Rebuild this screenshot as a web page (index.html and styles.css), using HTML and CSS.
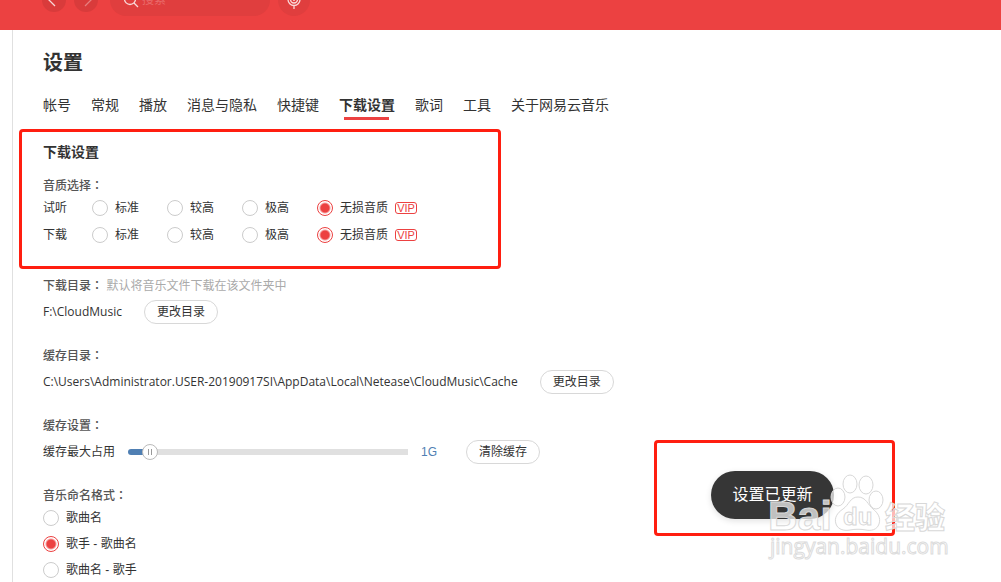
FILE: index.html
```html
<!DOCTYPE html>
<html lang="zh-CN">
<head>
  <meta charset="UTF-8">
  <title>设置</title>
  <link rel="stylesheet" href="styles.css">
</head>
<body>
  <div class="app">
    <header class="topbar">
      <button class="nav-btn" aria-label="后退">
        <svg width="12" height="12" viewBox="0 0 12 12"><path d="M7 0 1 6l6 6"/></svg>
      </button>
      <button class="nav-btn disabled" aria-label="前进">
        <svg width="12" height="12" viewBox="0 0 12 12"><path d="M5 0l6 6-6 6"/></svg>
      </button>
      <div class="search">
        <svg width="14" height="14" viewBox="0 0 14 14"><circle cx="6" cy="6" r="5.500"/><path d="M10 10 14 14"/></svg>
        <input type="text" placeholder="搜索" aria-label="搜索">
      </div>
      <button class="mic-btn" aria-label="听歌识曲">
        <svg width="16" height="18" viewBox="0 0 16 18"><rect x="4.500" y="0" width="7" height="12" rx="3.500"/><path d="M2 7v1.500a6 6 0 0 0 12 0V7M8 14.500V18M7 9h2"/></svg>
      </button>
    </header>

    <main class="page">
      <h1>设置</h1>

      <nav class="tabs">
        <a href="#account">帐号</a>
        <a href="#general">常规</a>
        <a href="#play">播放</a>
        <a href="#privacy">消息与隐私</a>
        <a href="#hotkeys">快捷键</a>
        <a href="#download" class="active">下载设置</a>
        <a href="#lyrics">歌词</a>
        <a href="#tools">工具</a>
        <a href="#about">关于网易云音乐</a>
      </nav>

      <section class="quality marked" id="download">
        <h2>下载设置</h2>
        <h3>音质选择<span lang="zh-TW">：</span></h3>
        <div class="quality-row" role="radiogroup" aria-label="试听">
          <span>试听</span>
          <label><input type="radio" name="listen">标准</label>
          <label><input type="radio" name="listen">较高</label>
          <label><input type="radio" name="listen">极高</label>
          <label><input type="radio" name="listen" checked>无损音质<span class="vip">VIP</span></label>
        </div>
        <div class="quality-row" role="radiogroup" aria-label="下载">
          <span>下载</span>
          <label><input type="radio" name="save">标准</label>
          <label><input type="radio" name="save">较高</label>
          <label><input type="radio" name="save">极高</label>
          <label><input type="radio" name="save" checked>无损音质<span class="vip">VIP</span></label>
        </div>
      </section>

      <section class="group">
        <h3>下载目录<span lang="zh-TW">：</span> <small>默认将音乐文件下载在该文件夹中</small></h3>
        <div class="row">
          <span class="path">F:\CloudMusic</span>
          <button class="btn">更改目录</button>
        </div>
      </section>

      <section class="group">
        <h3>缓存目录<span lang="zh-TW">：</span></h3>
        <div class="row">
          <span class="path">C:\Users\Administrator.USER-20190917SI\AppData\Local\Netease\CloudMusic\Cache</span>
          <button class="btn">更改目录</button>
        </div>
      </section>

      <section class="group">
        <h3>缓存设置<span lang="zh-TW">：</span></h3>
        <div class="row cache">
          <label for="cache-size">缓存最大占用</label>
          <input type="range" id="cache-size" min="0" max="1000" value="53">
          <output for="cache-size">1G</output>
          <button class="btn">清除缓存</button>
        </div>
      </section>

      <section class="group">
        <h3>音乐命名格式<span lang="zh-TW">：</span></h3>
        <label class="name-option"><input type="radio" name="format">歌曲名</label>
        <label class="name-option"><input type="radio" name="format" checked>歌手 - 歌曲名</label>
        <label class="name-option"><input type="radio" name="format">歌曲名 - 歌手</label>
      </section>
    </main>

    <div class="toast-area marked">
      <div class="toast" role="status">设置已更新</div>
    </div>

    <svg class="watermark" width="190" height="90" viewBox="0 0 190 90" aria-hidden="true">
      <g class="mark">
        <text class="latin" x="2" y="60">Bai</text>
        <ellipse cx="84" cy="14" rx="7" ry="9"/>
        <ellipse cx="100" cy="15" rx="7" ry="9"/>
        <ellipse cx="72" cy="27" rx="7" ry="9"/>
        <ellipse cx="110" cy="30" rx="7" ry="9"/>
        <path d="M92 27c8 0 10 8 15 12s8 9 6 15-8 7-13 6-11-1-16 0-12 0-14-6 1-11 7-15 7-12 15-12z"/>
        <text class="du" x="77" y="55">du</text>
        <text class="cjk" x="119" y="58">经验</text>
      </g>
      <text class="site" x="4" y="84">jingyan.baidu.com</text>
    </svg>
  </div>
</body>
</html>
```
FILE: styles.css
```css
* {
  margin: 0;
  padding: 0;
  box-sizing: border-box;
}

body {
  background: #fff;
  color: #333;
  font-family: "Liberation Sans", "Noto Sans CJK SC", sans-serif;
  font-size: 12px;
  line-height: 20px;
}

button,
input {
  font: inherit;
  color: inherit;
}

.app {
  position: relative;
  display: flex;
  flex-direction: column;
  height: 100vh;
  overflow: hidden;
}

/* Top bar, scrolled halfway out of view */
.topbar {
  display: flex;
  flex-shrink: 0;
  align-items: center;
  gap: 8px;
  height: 60px;
  margin-top: -30px;
  padding-left: 42px;
  background: #ec4141;
}

.topbar svg {
  overflow: visible;
  fill: none;
  stroke: #fff;
  stroke-opacity: 0.8;
  stroke-width: 1.3;
}

.nav-btn,
.mic-btn {
  display: flex;
  align-items: center;
  justify-content: center;
  width: 24px;
  height: 24px;
  border: none;
  border-radius: 50%;
  background: #d93b3b;
}

.topbar .disabled svg {
  stroke-opacity: 0.35;
}

.mic-btn {
  width: 32px;
  height: 32px;
  background: #e03e3e;
}

.search {
  display: flex;
  align-items: center;
  gap: 4px;
  width: 160px;
  height: 32px;
  margin-left: 4px;
  padding: 0 14px;
  border-radius: 16px;
  background: #e03e3e;
}

.search input {
  flex: 1;
  min-width: 0;
  border: none;
  outline: none;
  background: none;
}

.search input::placeholder {
  color: #e96a6a;
}

/* Settings page */
.page {
  flex: 1 0 auto;
  margin-left: 12px;
  padding: 20px 30px 0;
  border-left: 1px solid #e0e0e0;
}

h1 {
  margin-bottom: 19px;
  font-size: 20px;
  line-height: 26px;
}

.tabs {
  display: flex;
  gap: 20px;
  font-size: 14px;
}

.tabs a {
  position: relative;
  padding-bottom: 5px;
  color: #333;
  text-decoration: none;
  white-space: nowrap;
}

.tabs .active {
  font-weight: bold;
}

.tabs .active::after {
  content: "";
  position: absolute;
  left: 5px;
  right: 6px;
  bottom: 0;
  height: 3px;
  background: #ec4141;
}

.marked {
  border: 3px solid #ff1e10;
  border-radius: 4px;
}

.quality {
  width: 482px;
  margin: 9px 0 6px -24px;
  padding: 10px 21px 18px;
}

h2 {
  margin-bottom: 13px;
  font-size: 14px;
}

h3 {
  padding-top: 2px;
  color: #555;
  font-size: 12px;
  font-weight: 500;
  line-height: 18px;
}

h3 small {
  color: #aaa;
  font-size: 12px;
  font-weight: normal;
}

.quality-row {
  display: grid;
  grid-template-columns: 49px 75px 75px 75px auto;
  align-items: center;
  height: 26px;
}

.quality-row + .quality-row {
  margin-top: 1px;
}

.quality-row label,
.name-option {
  display: flex;
  align-items: center;
  gap: 7px;
}

.vip {
  width: 22px;
  height: 12px;
  border: 1px solid #ec4141;
  border-radius: 3px;
  color: #ec4141;
  font-size: 11px;
  line-height: 11px;
  text-align: center;
}

input[type="radio"] {
  appearance: none;
  width: 16px;
  height: 16px;
  border: 1px solid #ccc;
  border-radius: 50%;
  background: #fff;
}

input[type="radio"]:checked {
  border-color: #ec4141;
  background: radial-gradient(circle, #ec4141 4px, #fff 6px);
}

.group {
  margin-bottom: 21px;
}

.row {
  display: flex;
  align-items: center;
  gap: 22px;
  height: 24px;
  margin-top: 5px;
}

.path {
  font-family: "Open Sans", sans-serif;
}

.btn {
  width: 74px;
  height: 24px;
  border: 1px solid #d8d8d8;
  border-radius: 12px;
  background: #fff;
  line-height: 20px;
}

.cache {
  gap: 13px;
}

.cache output {
  width: 32px;
  color: #4f7fb3;
}

.cache input {
  appearance: none;
  width: 280px;
  height: 16px;
  background: none;
}

.cache input::-webkit-slider-runnable-track {
  height: 6px;
  border-radius: 3px 0 0 3px;
  background: linear-gradient(to right, #4f7fb3 20px, #e0e0e0 20px);
}

.cache input::-webkit-slider-thumb {
  appearance: none;
  width: 16px;
  height: 16px;
  margin-top: -5px;
  border: 1px solid #bbb;
  border-radius: 50%;
  background:
    linear-gradient(#999, #999) 5px 4px / 1px 6px no-repeat,
    linear-gradient(#999, #999) 8px 4px / 1px 6px no-repeat,
    #fff;
}

.name-option {
  width: max-content;
  height: 26px;
}

/* Notification */
.toast-area {
  position: absolute;
  right: 106px;
  bottom: 46px;
  width: 241px;
  height: 96px;
  padding: 28px 54px;
}

.toast {
  width: 123px;
  height: 48px;
  border-radius: 24px;
  background: #363636;
  box-shadow: 0 2px 6px rgba(0, 0, 0, 0.12);
  color: #fff;
  font-size: 16px;
  line-height: 48px;
  text-align: center;
}

.watermark {
  position: absolute;
  right: 45px;
  bottom: 22px;
  overflow: visible;
  pointer-events: none;
}

.watermark .mark {
  fill: rgba(255, 255, 255, 0.7);
  stroke: #d8d8d8;
  stroke-width: 1px;
}

.watermark text {
  font-family: "Liberation Sans", "Noto Sans CJK SC", sans-serif;
  font-weight: bold;
}

.watermark .latin {
  font-size: 41px;
}

.watermark .du {
  font-size: 24px;
}

.watermark .cjk {
  font-size: 30px;
  font-weight: 900;
}

.watermark .site {
  fill: #fff;
  stroke: #dcdcdc;
  stroke-width: 1px;
  font-family: "Open Sans", sans-serif;
  font-size: 21px;
  font-weight: normal;
}
```
